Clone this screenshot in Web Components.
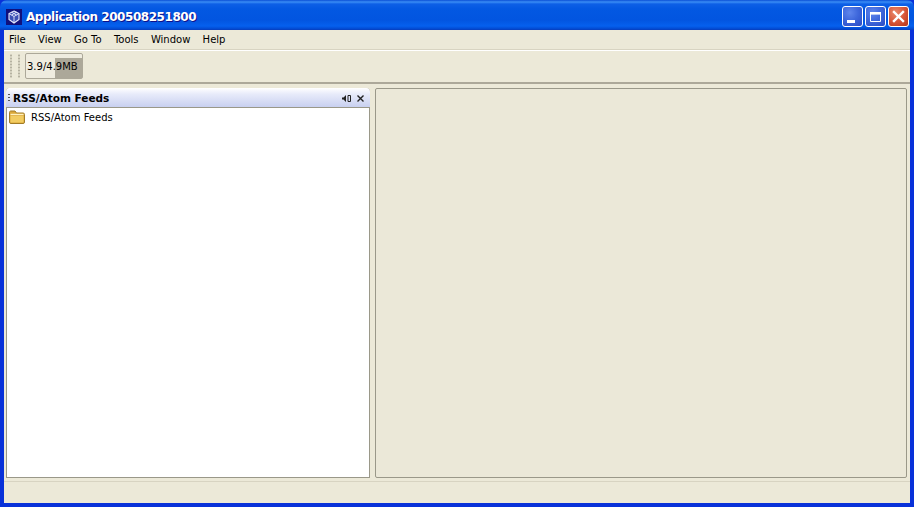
<!DOCTYPE html>
<html>
<head>
<meta charset="utf-8">
<title>Application 200508251800</title>
<style>
  html, body { margin: 0; height: 100%; overflow: hidden; background: #0831d9; }
</style>
</head>
<body>
<xp-window caption="Application 200508251800">
  <app-menubar></app-menubar>
  <app-toolbar></app-toolbar>
  <app-workspace>
    <feed-view title-text="RSS/Atom Feeds" slot="left">
      <tree-item label="RSS/Atom Feeds"></tree-item>
    </feed-view>
    <editor-area slot="right"></editor-area>
  </app-workspace>
  <status-bar></status-bar>
</xp-window>

<script>
class XpWindow extends HTMLElement {
  constructor() {
    super();
    this.attachShadow({ mode: "open" });
    this.shadowRoot.innerHTML = `
      <style>
        :host{
          display:flex;
          flex-direction:column;
          width:914px;
          height:507px;
          box-sizing:border-box;
          background:#0831d9;
          font-family:"DejaVu Sans",sans-serif;
          font-size:10px;
          color:#000;
        }
        #title{
          flex:none;
          height:30px;
          box-sizing:border-box;
          display:flex;
          align-items:center;
          padding:3px 5px 0 6px;
          border-radius:7px 7px 0 0;
          background:linear-gradient(to bottom,#0a4fd6 0,#3a8df5 2px,#0d5fe6 4px,#0358e2 9px,#0255e0 20px,#0560ee 26px,#0249d0 29px,#0a3bb8 30px);
        }
        #logo{ flex:none; width:16px; height:16px; margin-right:4px; }
        #caption{
          flex:1;
          color:#fff;
          font-weight:bold;
          font-size:12px;
          letter-spacing:-.45px;
          text-shadow:1px 1px 0 #0f1089;
          white-space:nowrap;
        }
        #buttons{ display:flex; gap:2px; }
        #body{
          flex:1;
          min-height:0;
          display:flex;
          flex-direction:column;
          margin:0 4px 4px 4px;
          background:#ece9d8;
        }
      </style>
      <div id="title">
        <svg id="logo" viewBox="0 0 16 16">
          <rect width="16" height="16" fill="#10107c"/>
          <path d="M8 2 13 4.5V10.5L8 14 3 10.5V4.5Z" fill="#3b4fb4" stroke="#e8ecff" stroke-width="1.1"/>
          <path d="M3 4.5 8 7.5 13 4.5M8 7.5V14M5.5 3.2 10.5 6M10.5 3.2 5.5 6" fill="none" stroke="#e8ecff" stroke-width=".9"/>
        </svg>
        <span id="caption"></span>
        <div id="buttons">
          <caption-button kind="min"></caption-button>
          <caption-button kind="max"></caption-button>
          <caption-button kind="close"></caption-button>
        </div>
      </div>
      <div id="body"><slot></slot></div>
    `;
  }
  connectedCallback() {
    this.shadowRoot.getElementById("caption").textContent = this.getAttribute("caption");
  }
}
customElements.define("xp-window", XpWindow);

class CaptionButton extends HTMLElement {
  constructor() {
    super();
    this.attachShadow({ mode: "open" });
    const kind = this.getAttribute("kind");
    const glyphs = {
      min: `<rect x="4" y="13" width="8" height="3" fill="#fff"/>`,
      max: `<path d="M4.5 5.5h10v9h-10z" fill="none" stroke="#fff"/><rect x="4" y="5" width="11" height="2.6" fill="#fff"/>`,
      close: `<path d="M5 5l9 9M14 5l-9 9" stroke="#fff" stroke-width="2.4" stroke-linecap="square"/>`
    };
    this.shadowRoot.innerHTML = `
      <style>
        :host{
          display:block;
          width:21px;
          height:21px;
          box-sizing:border-box;
          border:1px solid #fff;
          border-radius:3px;
          background:radial-gradient(circle at 35% 30%,#5f86ec 0,#3f68dc 45%,#2a4bc4 100%);
        }
        :host([kind="close"]){
          background:radial-gradient(circle at 35% 30%,#ea8a6c 0,#d8583a 50%,#b53518 100%);
        }
        svg{ display:block; width:19px; height:19px; }
      </style>
      <svg viewBox="0 0 19 19">${glyphs[kind]}</svg>
    `;
  }
}
customElements.define("caption-button", CaptionButton);

class AppMenubar extends HTMLElement {
  constructor() {
    super();
    this.attachShadow({ mode: "open" });
    const items = ["File", "View", "Go To", "Tools", "Window", "Help"];
    this.shadowRoot.innerHTML = `
      <style>
        :host{
          display:flex;
          flex:none;
          height:20px;
          box-sizing:border-box;
          align-items:center;
          gap:12.3px;
          padding:0 0 1px 5px;
          border-bottom:1px solid #d8d4c2;
          background:#ece9d8;
        }
      </style>
      ${items.map(i => `<span>${i}</span>`).join("")}
    `;
  }
}
customElements.define("app-menubar", AppMenubar);

class AppToolbar extends HTMLElement {
  constructor() {
    super();
    this.attachShadow({ mode: "open" });
    this.shadowRoot.innerHTML = `
      <style>
        :host{
          display:flex;
          flex:none;
          height:34px;
          box-sizing:border-box;
          align-items:center;
          padding:0 0 1px 6px;
          border-top:1px solid #fff;
          border-bottom:2px solid #aca899;
          background:#ece9d8;
        }
        #grip{
          width:11px;
          height:24px;
          margin-right:4px;
          background-image:radial-gradient(circle,#b5b2a1 0 1px,transparent 1.2px);
          background-size:8px 3px;
          background-position:-3px 0;
        }
        #heap{
          width:58px;
          height:26px;
          box-sizing:border-box;
          border:1px solid #aca899;
          border-radius:2px;
          background:#efecdf linear-gradient(#aca899,#aca899) no-repeat 29px 4px / 27px 20px;
          display:flex;
          align-items:center;
          padding-left:1px;
          white-space:nowrap;
        }
      </style>
      <div id="grip"></div>
      <div id="heap">3.9/4.9MB</div>
    `;
  }
}
customElements.define("app-toolbar", AppToolbar);

class AppWorkspace extends HTMLElement {
  constructor() {
    super();
    this.attachShadow({ mode: "open" });
    this.shadowRoot.innerHTML = `
      <style>
        :host{
          display:flex;
          flex:1;
          min-height:0;
          gap:5px;
          padding:4px 3px 3px 2px;
          border-bottom:1px solid #d8d4c2;
          background:#ece9d8;
        }
        ::slotted([slot="left"]){ flex:none; width:364px; }
        ::slotted([slot="right"]){ flex:1; }
      </style>
      <slot name="left"></slot>
      <slot name="right"></slot>
    `;
  }
}
customElements.define("app-workspace", AppWorkspace);

class FeedView extends HTMLElement {
  constructor() {
    super();
    this.attachShadow({ mode: "open" });
    this.shadowRoot.innerHTML = `
      <style>
        :host{
          display:flex;
          flex-direction:column;
          box-sizing:border-box;
          border:1px solid #9a9889;
          border-top:none;
          border-radius:4px 4px 0 0;
          background:#fff;
        }
        #head{
          flex:none;
          height:20px;
          box-sizing:border-box;
          display:flex;
          align-items:center;
          padding:1px 4px 0 2px;
          margin:0 -1px;
          border-radius:4px 4px 0 0;
          border-bottom:1px solid #9a9889;
          background:linear-gradient(to bottom,#fff 0,#e8ebfa 6px,#c8d0f0 100%);
          font-weight:bold;
          font-size:10.5px;
        }
        #grip{
          width:2px;
          height:9px;
          margin-right:3px;
          background-image:linear-gradient(to bottom,#555 0 1px,transparent 1px);
          background-size:2px 3px;
        }
        #label{ flex:1; }
        svg{ display:block; }
        #content{ flex:1; padding:0 0 0 2px; }
      </style>
      <div id="head">
        <span id="grip"></span>
        <span id="label"></span>
        <svg width="10" height="9" viewBox="0 0 10 9" style="margin-right:4px">
          <path d="M0 3.5h1.500L4 1v7L1.500 5.500H0z" fill="#222"/>
          <path d="M6 1.500h2.500v6H6z" fill="none" stroke="#222"/>
        </svg>
        <svg width="9" height="9" viewBox="0 0 9 9" style="margin-right:1px">
          <path d="M1.500 1.500l6 6M7.500 1.500l-6 6" stroke="#222" stroke-width="1.400"/>
        </svg>
      </div>
      <div id="content"><slot></slot></div>
    `;
  }
  connectedCallback() {
    this.shadowRoot.getElementById("label").textContent = this.getAttribute("title-text");
  }
}
customElements.define("feed-view", FeedView);

class TreeItem extends HTMLElement {
  constructor() {
    super();
    this.attachShadow({ mode: "open" });
    this.shadowRoot.innerHTML = `
      <style>
        :host{
          display:flex;
          align-items:center;
          height:18px;
        }
        svg{ flex:none; margin-right:6px; }
      </style>
      <svg width="16" height="14" viewBox="0 0 16 14">
        <path d="M.5 3v9a1.500 1.500 0 0 0 1.500 1.500h12a1.500 1.500 0 0 0 1.500-1.500V4.500A1.500 1.500 0 0 0 14 3H7.500L6 1H2A1.500 1.500 0 0 0 .5 3z" fill="#dca93a" stroke="#a27c28"/>
        <path d="M1.500 6h13v6.500h-13z" fill="#f2cc62"/>
        <path d="M1.500 4.500h13" stroke="#fff2c0" stroke-width="1.400"/>
      </svg>
      <span id="label"></span>
    `;
  }
  connectedCallback() {
    this.shadowRoot.getElementById("label").textContent = this.getAttribute("label");
  }
}
customElements.define("tree-item", TreeItem);

class EditorArea extends HTMLElement {
  constructor() {
    super();
    this.attachShadow({ mode: "open" });
    this.shadowRoot.innerHTML = `
      <style>
        :host{
          display:block;
          box-sizing:border-box;
          border:1px solid #9a9889;
          border-radius:2px;
          background:#ebe8d8;
        }
      </style>
    `;
  }
}
customElements.define("editor-area", EditorArea);

class StatusBar extends HTMLElement {
  constructor() {
    super();
    this.attachShadow({ mode: "open" });
    this.shadowRoot.innerHTML = `
      <style>
        :host{
          display:block;
          flex:none;
          height:21px;
          background:#ece9d8;
        }
      </style>
    `;
  }
}
customElements.define("status-bar", StatusBar);
</script>
</body>
</html>
